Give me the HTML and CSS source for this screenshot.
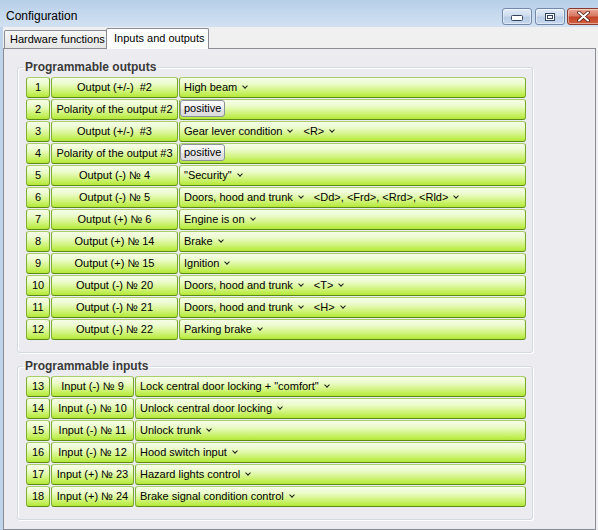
FILE: index.html
```html
<!DOCTYPE html>
<html>
<head>
<meta charset="utf-8">
<title>Configuration</title>
<link rel="stylesheet" href="styles.css">
</head>
<body>
<div class="window">
  <div class="titlebar">
    <span class="title">Configuration</span>
    <div class="caption-buttons">
      <span class="cbtn min"><svg width="12" height="6" viewBox="0 0 12 6"><rect x="0.5" y="0.5" width="11" height="5" rx="1" fill="#fff" stroke="#34445a"/></svg></span>
      <span class="cbtn max"><svg width="10" height="8" viewBox="0 0 10 8"><rect x="0.5" y="0.5" width="9" height="7" fill="#fff" stroke="#34445a"/><rect x="2.5" y="2.5" width="5" height="3" fill="none" stroke="#34445a"/></svg></span>
      <span class="cbtn close"><svg width="13" height="11" viewBox="0 0 13 11"><path d="M2 1.5 L11 9.5 M11 1.5 L2 9.5" stroke="#4a1a10" stroke-width="3.6" stroke-linecap="round"/><path d="M2 1.5 L11 9.5 M11 1.5 L2 9.5" stroke="#fff" stroke-width="2" stroke-linecap="round"/></svg></span>
    </div>
  </div>
  <div class="client">
    <div class="tabs">
      <div class="tab">Hardware functions</div>
      <div class="tab active">Inputs and outputs</div>
    </div>
    <div class="panel">
      <fieldset class="group">
        <legend>Programmable outputs</legend>
        <div class="grid outputs">
          <div class="cell num">1</div><div class="cell name">Output (+/-)&nbsp; #2</div><div class="cell val"><span class="seg">High beam<i class="dd"></i></span></div>
          <div class="cell num">2</div><div class="cell name">Polarity of the output #2</div><div class="cell val"><span class="btn">positive</span></div>
          <div class="cell num">3</div><div class="cell name">Output (+/-)&nbsp; #3</div><div class="cell val"><span class="seg">Gear lever condition<i class="dd"></i></span><span class="seg">&lt;R&gt;<i class="dd"></i></span></div>
          <div class="cell num">4</div><div class="cell name">Polarity of the output #3</div><div class="cell val"><span class="btn">positive</span></div>
          <div class="cell num">5</div><div class="cell name">Output (-) № 4</div><div class="cell val"><span class="seg">"Security"<i class="dd"></i></span></div>
          <div class="cell num">6</div><div class="cell name">Output (-) № 5</div><div class="cell val"><span class="seg">Doors, hood and trunk<i class="dd"></i></span><span class="seg">&lt;Dd&gt;, &lt;Frd&gt;, &lt;Rrd&gt;, &lt;Rld&gt;<i class="dd"></i></span></div>
          <div class="cell num">7</div><div class="cell name">Output (+) № 6</div><div class="cell val"><span class="seg">Engine is on<i class="dd"></i></span></div>
          <div class="cell num">8</div><div class="cell name">Output (+) № 14</div><div class="cell val"><span class="seg">Brake<i class="dd"></i></span></div>
          <div class="cell num">9</div><div class="cell name">Output (+) № 15</div><div class="cell val"><span class="seg">Ignition<i class="dd"></i></span></div>
          <div class="cell num">10</div><div class="cell name">Output (-) № 20</div><div class="cell val"><span class="seg">Doors, hood and trunk<i class="dd"></i></span><span class="seg">&lt;T&gt;<i class="dd"></i></span></div>
          <div class="cell num">11</div><div class="cell name">Output (-) № 21</div><div class="cell val"><span class="seg">Doors, hood and trunk<i class="dd"></i></span><span class="seg">&lt;H&gt;<i class="dd"></i></span></div>
          <div class="cell num">12</div><div class="cell name">Output (-) № 22</div><div class="cell val"><span class="seg">Parking brake<i class="dd"></i></span></div>
        </div>
      </fieldset>
      <fieldset class="group second">
        <legend>Programmable inputs</legend>
        <div class="grid inputs">
          <div class="cell num">13</div><div class="cell name">Input (-) № 9</div><div class="cell val"><span class="seg">Lock central door locking + "comfort"<i class="dd"></i></span></div>
          <div class="cell num">14</div><div class="cell name">Input (-) № 10</div><div class="cell val"><span class="seg">Unlock central door locking<i class="dd"></i></span></div>
          <div class="cell num">15</div><div class="cell name">Input (-) № 11</div><div class="cell val"><span class="seg">Unlock trunk<i class="dd"></i></span></div>
          <div class="cell num">16</div><div class="cell name">Input (-) № 12</div><div class="cell val"><span class="seg">Hood switch input<i class="dd"></i></span></div>
          <div class="cell num">17</div><div class="cell name">Input (+) № 23</div><div class="cell val"><span class="seg">Hazard lights control<i class="dd"></i></span></div>
          <div class="cell num">18</div><div class="cell name">Input (+) № 24</div><div class="cell val"><span class="seg">Brake signal condition control<i class="dd"></i></span></div>
        </div>
      </fieldset>
    </div>
  </div>
</div>
</body>
</html>
```

FILE: styles.css
```css
* { box-sizing: border-box; }
html, body { margin: 0; padding: 0; }
body {
  width: 598px;
  height: 530px;
  overflow: hidden;
  background: #f0f0f0;
  font-family: "Liberation Sans", Arial, sans-serif;
  font-size: 11px;
  color: #000;
}
.window {
  width: 598px;
  height: 530px;
  display: flex;
  flex-direction: column;
  overflow: hidden;
}
.titlebar {
  height: 27px;
  flex: none;
  display: flex;
  align-items: flex-start;
  overflow: hidden;
  background: linear-gradient(to bottom, #b8cfe9 0%, #c6d9ee 55%, #d2e1f2 100%);
}
.title {
  flex: 0 0 502px;
  font-size: 12px;
  line-height: 15px;
  padding: 9px 0 0 6px;
}
.caption-buttons {
  flex: none;
  display: flex;
  margin-top: 8px;
}
.cbtn {
  height: 17px;
  border-radius: 3px;
  display: flex;
  align-items: center;
  justify-content: center;
  border: 1px solid #7289aa;
  background: linear-gradient(to bottom, #e3ecf7 0%, #cddcee 45%, #b9cde6 55%, #c6d8ee 100%);
  box-shadow: inset 0 0 0 1px rgba(255,255,255,0.45);
}
.cbtn svg { display: block; }
.min { width: 30px; margin-right: 3px; }
.min svg { margin-top: 3px; }
.max { width: 30px; margin-right: 2px; }
.close {
  width: 43px;
  border-color: #8a3a2a;
  background: linear-gradient(to bottom, #eaa595 0%, #d77a64 45%, #c3432a 55%, #d3603f 100%);
  justify-content: flex-start;
  padding-left: 9px;
}
.client {
  flex: 1;
  display: flex;
  flex-direction: column;
  border-left: 3px solid #bfd3ea;
}
.tabs {
  height: 21px;
  flex: none;
  display: flex;
  align-items: flex-end;
  padding-left: 1px;
  position: relative;
  z-index: 1;
}
.tab {
  width: 103px;
  height: 18px;
  border: 1px solid #898c95;
  border-bottom: none;
  border-radius: 2px 2px 0 0;
  background: linear-gradient(to bottom, #f7f7f7, #e6e6e6);
  padding-left: 5px;
  line-height: 17px;
  white-space: nowrap;
}
.tab.active {
  width: 103px;
  height: 21px;
  margin-bottom: -1px;
  margin-left: -1px;
  background: #fff;
  padding-left: 7px;
  line-height: 18px;
}
.panel {
  flex: 1;
  width: 593px;
  border: 1px solid #898c95;
  background: #ececf0;
  padding: 11px 0 0 13px;
}
.group {
  width: 516px;
  margin: 0;
  padding: 3px 6px 12px 8px;
  border: 1px solid #d2d9e0;
  border-radius: 3px;
  box-shadow: 1px 1px 0 #fff, inset 1px 1px 0 #fff;
}
.group.second { margin-top: 6px; }
.group legend {
  font-size: 12px;
  font-weight: bold;
  line-height: 14px;
  color: #3a3a3a;
  padding: 0 2px;
  margin-left: -3px;
}
.grid {
  display: grid;
  grid-auto-rows: 21px;
  gap: 1px;
}
.outputs { grid-template-columns: 24px 127px 1fr; }
.inputs { grid-template-columns: 24px 83px 1fr; }
.cell {
  border: 1px solid;
  border-color: #a9cf6c #78a82a #5b8a16 #7fb035;
  border-radius: 3px;
  background: linear-gradient(to bottom, #f6fde9 0%, #ecfbcc 30%, #d6f58e 60%, #bfee4e 88%, #b3e63a 100%);
  line-height: 19px;
  white-space: nowrap;
  overflow: hidden;
}
.num, .name { text-align: center; }
.val { padding-left: 4px; }
.seg + .seg { margin-left: 11px; }
.dd {
  display: inline-block;
  width: 4px;
  height: 4px;
  border-right: 1px solid #1e1e1e;
  border-bottom: 1px solid #1e1e1e;
  transform: rotate(45deg);
  margin-left: 6px;
  vertical-align: 3px;
}
.btn {
  display: inline-block;
  vertical-align: top;
  height: 17px;
  line-height: 15px;
  margin-left: -4px;
  padding: 0 3px;
  border: 1px solid #8a929c;
  border-radius: 3px;
  background: linear-gradient(to bottom, #fbfbfb 0%, #f0f0f0 50%, #e4e4e4 51%, #dcdcdc 100%);
}
```
